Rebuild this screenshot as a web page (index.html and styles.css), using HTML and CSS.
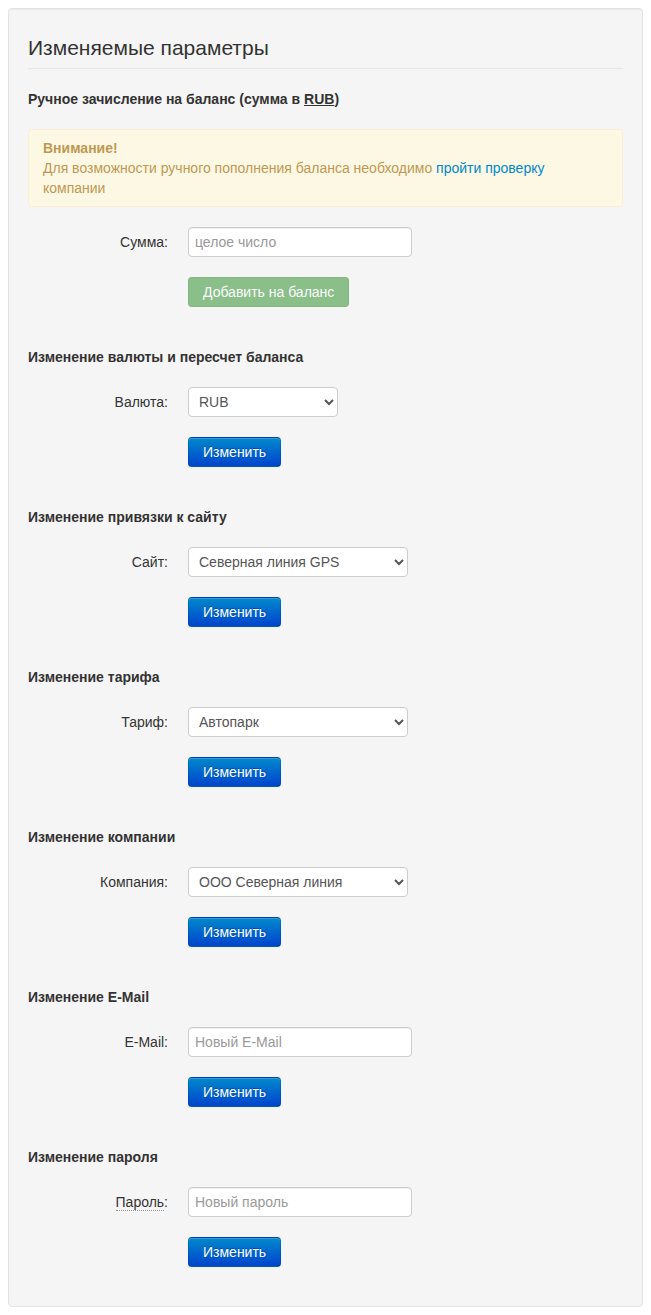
FILE: index.html
```html
<!DOCTYPE html>
<html lang="ru">
<head>
<meta charset="utf-8">
<title>Изменяемые параметры</title>
<link rel="stylesheet" href="styles.css">
</head>
<body>
<div class="well">
  <div class="legend">Изменяемые параметры</div>

  <div class="section">
    <div class="section-title">Ручное зачисление на баланс (сумма в <span class="u">RUB</span>)</div>
    <div class="alert">
      <strong>Внимание!</strong><br>
      Для возможности ручного пополнения баланса необходимо <a href="#" class="link">пройти проверку</a> компании
    </div>
    <div class="row">
      <label class="label">Сумма:</label>
      <input class="input" type="text" placeholder="целое число">
    </div>
    <div class="row">
      <div class="label"></div>
      <button class="btn btn-success-disabled">Добавить на баланс</button>
    </div>
  </div>

  <div class="section">
    <div class="section-title">Изменение валюты и пересчет баланса</div>
    <div class="row">
      <label class="label">Валюта:</label>
      <select class="select select-small"><option>RUB</option></select>
    </div>
    <div class="row">
      <div class="label"></div>
      <button class="btn btn-primary">Изменить</button>
    </div>
  </div>

  <div class="section">
    <div class="section-title">Изменение привязки к сайту</div>
    <div class="row">
      <label class="label">Сайт:</label>
      <select class="select"><option>Северная линия GPS</option></select>
    </div>
    <div class="row">
      <div class="label"></div>
      <button class="btn btn-primary">Изменить</button>
    </div>
  </div>

  <div class="section">
    <div class="section-title">Изменение тарифа</div>
    <div class="row">
      <label class="label">Тариф:</label>
      <select class="select"><option>Автопарк</option></select>
    </div>
    <div class="row">
      <div class="label"></div>
      <button class="btn btn-primary">Изменить</button>
    </div>
  </div>

  <div class="section">
    <div class="section-title">Изменение компании</div>
    <div class="row">
      <label class="label">Компания:</label>
      <select class="select"><option>ООО Северная линия</option></select>
    </div>
    <div class="row">
      <div class="label"></div>
      <button class="btn btn-primary">Изменить</button>
    </div>
  </div>

  <div class="section">
    <div class="section-title">Изменение E-Mail</div>
    <div class="row">
      <label class="label">E-Mail:</label>
      <input class="input" type="text" placeholder="Новый E-Mail">
    </div>
    <div class="row">
      <div class="label"></div>
      <button class="btn btn-primary">Изменить</button>
    </div>
  </div>

  <div class="section">
    <div class="section-title">Изменение пароля</div>
    <div class="row">
      <label class="label"><abbr class="abbr" title="Пароль">Пароль</abbr>:</label>
      <input class="input" type="password" placeholder="Новый пароль">
    </div>
    <div class="row">
      <div class="label"></div>
      <button class="btn btn-primary">Изменить</button>
    </div>
  </div>
</div>
</body>
</html>
```

FILE: styles.css
```css
body {
  margin: 8px;
  font-family: "Liberation Sans", Arial, Helvetica, sans-serif;
  font-size: 14px;
  line-height: 20px;
  color: #333;
  background: #fff;
}

.well {
  background: #f5f5f5;
  border: 1px solid #e3e3e3;
  border-radius: 4px;
  padding: 19px;
  box-shadow: inset 0 1px 1px rgba(0, 0, 0, 0.05);
}

.legend {
  font-size: 21px;
  line-height: 40px;
  color: #333;
  border-bottom: 1px solid #e5e5e5;
  margin-bottom: 20px;
}

.section {
  display: flow-root;
  margin-bottom: 20px;
}

.section:last-child {
  margin-bottom: 0;
}

.section-title {
  font-weight: bold;
  margin-bottom: 20px;
}

.u {
  text-decoration: underline;
}

.alert {
  background: #fcf8e3;
  border: 1px solid #fbeed5;
  border-radius: 4px;
  color: #c09853;
  padding: 8px 35px 8px 14px;
  margin-bottom: 20px;
}

.link {
  color: #0088cc;
  text-decoration: none;
}

.row {
  display: flex;
  align-items: flex-start;
  gap: 20px;
  margin-bottom: 20px;
}

.label {
  width: 140px;
  flex: 0 0 140px;
  text-align: right;
  padding-top: 5px;
  line-height: 20px;
}

.row .label:empty {
  padding-top: 0;
}

.abbr {
  text-decoration: none;
  border-bottom: 1px dotted #999;
  cursor: help;
}

.input {
  box-sizing: border-box;
  width: 224px;
  height: 30px;
  padding: 4px 6px;
  margin: 0;
  font-family: inherit;
  font-size: 14px;
  line-height: 20px;
  color: #555;
  background: #fff;
  border: 1px solid #ccc;
  border-radius: 4px;
  box-shadow: inset 0 1px 1px rgba(0, 0, 0, 0.075);
}

.input::placeholder {
  color: #999;
}

.select {
  box-sizing: border-box;
  width: 220px;
  height: 30px;
  padding: 4px 6px;
  margin: 0;
  font-family: inherit;
  font-size: 14px;
  color: #555;
  background-color: #fff;
  border: 1px solid #ccc;
  border-radius: 4px;
}

.select-small {
  width: 150px;
}

.btn {
  box-sizing: border-box;
  height: 30px;
  padding: 4px 14px;
  margin: 0;
  font-family: inherit;
  font-size: 14px;
  line-height: 20px;
  border-radius: 4px;
  cursor: pointer;
}

.btn-primary {
  color: #fff;
  text-shadow: 0 -1px 0 rgba(0, 0, 0, 0.25);
  background-color: #006dcc;
  background-image: linear-gradient(to bottom, #0088cc, #0044cc);
  border: 1px solid;
  border-color: rgba(0, 0, 0, 0.1) rgba(0, 0, 0, 0.1) rgba(0, 0, 0, 0.25);
  box-shadow: inset 0 1px 0 rgba(255, 255, 255, 0.2), 0 1px 2px rgba(0, 0, 0, 0.05);
}

.btn-success-disabled {
  color: #fff;
  background-color: #51a351;
  border: 1px solid rgba(0, 0, 0, 0.1);
  opacity: 0.65;
  cursor: default;
}
```
